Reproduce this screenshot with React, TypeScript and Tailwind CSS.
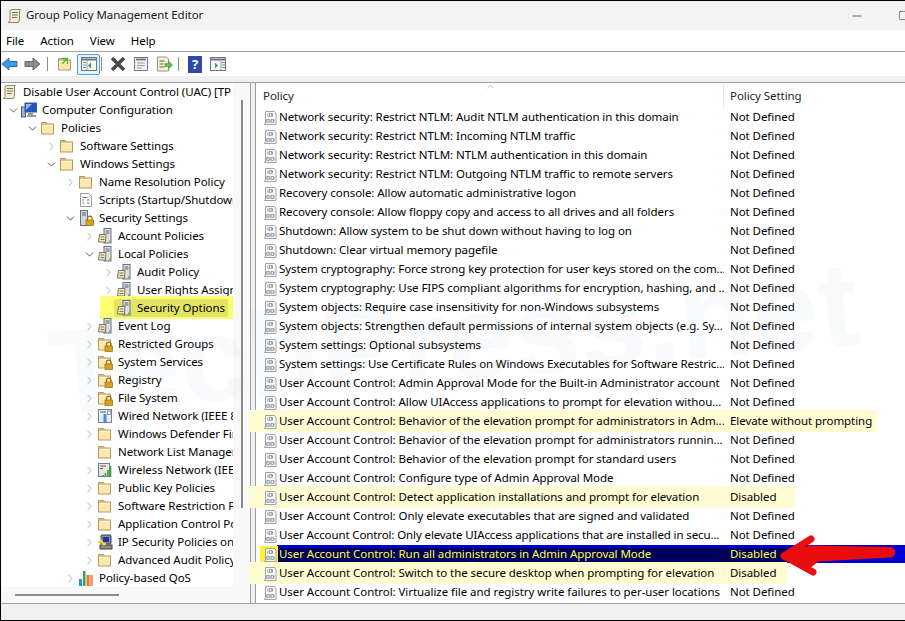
import React from 'react';
import { ChevronRight, ChevronDown, Minus, Square, ArrowUpRight } from 'lucide-react';

type Kind = 'scroll' | 'computer' | 'folder' | 'script' | 'secure' | 'server' | 'lockfolder' | 'wired' | 'wireless' | 'ipsec' | 'qos';

const treeRows: { label: string; depth: number; icon: Kind; arrow?: 'open' | 'closed'; selected?: boolean }[] = [
  { label: 'Disable User Account Control (UAC) [TP', depth: 0, icon: 'scroll' },
  { label: 'Computer Configuration', depth: 1, icon: 'computer', arrow: 'open' },
  { label: 'Policies', depth: 2, icon: 'folder', arrow: 'open' },
  { label: 'Software Settings', depth: 3, icon: 'folder', arrow: 'closed' },
  { label: 'Windows Settings', depth: 3, icon: 'folder', arrow: 'open' },
  { label: 'Name Resolution Policy', depth: 4, icon: 'folder', arrow: 'closed' },
  { label: 'Scripts (Startup/Shutdown)', depth: 4, icon: 'script' },
  { label: 'Security Settings', depth: 4, icon: 'secure', arrow: 'open' },
  { label: 'Account Policies', depth: 5, icon: 'server', arrow: 'closed' },
  { label: 'Local Policies', depth: 5, icon: 'server', arrow: 'open' },
  { label: 'Audit Policy', depth: 6, icon: 'server', arrow: 'closed' },
  { label: 'User Rights Assignment', depth: 6, icon: 'server', arrow: 'closed' },
  { label: 'Security Options', depth: 6, icon: 'server', selected: true },
  { label: 'Event Log', depth: 5, icon: 'server', arrow: 'closed' },
  { label: 'Restricted Groups', depth: 5, icon: 'lockfolder', arrow: 'closed' },
  { label: 'System Services', depth: 5, icon: 'lockfolder', arrow: 'closed' },
  { label: 'Registry', depth: 5, icon: 'lockfolder', arrow: 'closed' },
  { label: 'File System', depth: 5, icon: 'lockfolder', arrow: 'closed' },
  { label: 'Wired Network (IEEE 802.3)', depth: 5, icon: 'wired', arrow: 'closed' },
  { label: 'Windows Defender Firewall', depth: 5, icon: 'folder', arrow: 'closed' },
  { label: 'Network List Manager Policies', depth: 5, icon: 'folder' },
  { label: 'Wireless Network (IEEE 802.11)', depth: 5, icon: 'wireless', arrow: 'closed' },
  { label: 'Public Key Policies', depth: 5, icon: 'folder', arrow: 'closed' },
  { label: 'Software Restriction Policies', depth: 5, icon: 'folder', arrow: 'closed' },
  { label: 'Application Control Policies', depth: 5, icon: 'folder', arrow: 'closed' },
  { label: 'IP Security Policies on Local', depth: 5, icon: 'ipsec', arrow: 'closed' },
  { label: 'Advanced Audit Policy', depth: 5, icon: 'folder', arrow: 'closed' },
  { label: 'Policy-based QoS', depth: 4, icon: 'qos', arrow: 'closed' },
];

const ND = 'Not Defined';
const policies: { name: string; value: string; tight?: boolean; mark?: 'w877' | 'w795' | 'w787' | 'selected' }[] = [
  { name: 'Network security: Restrict NTLM: Audit NTLM authentication in this domain', value: ND },
  { name: 'Network security: Restrict NTLM: Incoming NTLM traffic', value: ND },
  { name: 'Network security: Restrict NTLM: NTLM authentication in this domain', value: ND },
  { name: 'Network security: Restrict NTLM: Outgoing NTLM traffic to remote servers', value: ND },
  { name: 'Recovery console: Allow automatic administrative logon', value: ND },
  { name: 'Recovery console: Allow floppy copy and access to all drives and all folders', value: ND },
  { name: 'Shutdown: Allow system to be shut down without having to log on', value: ND },
  { name: 'Shutdown: Clear virtual memory pagefile', value: ND },
  { name: 'System cryptography: Force strong key protection for user keys stored on the com...', value: ND },
  { name: 'System cryptography: Use FIPS compliant algorithms for encryption, hashing, and ...', value: ND },
  { name: 'System objects: Require case insensitivity for non-Windows subsystems', value: ND },
  { name: 'System objects: Strengthen default permissions of internal system objects (e.g. Sy...', value: ND },
  { name: 'System settings: Optional subsystems', value: ND },
  { name: 'System settings: Use Certificate Rules on Windows Executables for Software Restric...', value: ND, tight: true },
  { name: 'User Account Control: Admin Approval Mode for the Built-in Administrator account', value: ND },
  { name: 'User Account Control: Allow UIAccess applications to prompt for elevation withou...', value: ND },
  { name: 'User Account Control: Behavior of the elevation prompt for administrators in Adm...', value: 'Elevate without prompting', mark: 'w877' },
  { name: 'User Account Control: Behavior of the elevation prompt for administrators runnin...', value: ND },
  { name: 'User Account Control: Behavior of the elevation prompt for standard users', value: ND },
  { name: 'User Account Control: Configure type of Admin Approval Mode', value: ND },
  { name: 'User Account Control: Detect application installations and prompt for elevation', value: 'Disabled', mark: 'w795' },
  { name: 'User Account Control: Only elevate executables that are signed and validated', value: ND },
  { name: 'User Account Control: Only elevate UIAccess applications that are installed in secu...', value: ND, tight: true },
  { name: 'User Account Control: Run all administrators in Admin Approval Mode', value: 'Disabled', mark: 'selected' },
  { name: 'User Account Control: Switch to the secure desktop when prompting for elevation', value: 'Disabled', mark: 'w787' },
  { name: 'User Account Control: Virtualize file and registry write failures to per-user locations', value: ND },
];

function FolderShape() {
  return (
    <>
      <path d="M1.5 4V2.5h5l1 1.5" fill="#f6e3a8" stroke="#b59a5a" strokeWidth="1" />
      <rect x="1.5" y="4" width="12" height="10" fill="#fbe8b0" stroke="#b59a5a" strokeWidth="1" />
      <rect x="2.5" y="5" width="10" height="1" fill="#fff6d8" />
    </>
  );
}

function Lock() {
  return (
    <>
      <path d="M9.5 10V8.5a2.3 2.3 0 0 1 4.6 0V10" fill="none" stroke="#8f7420" strokeWidth="1.2" />
      <rect x="8" y="10" width="7.5" height="5.5" fill="#d9a21e" stroke="#8f6b10" strokeWidth="0.7" />
    </>
  );
}

function TreeIcon({ kind }: { kind: Kind }) {
  return (
    <svg width="16" height="16" viewBox="0 0 16 16" className="shrink-0">
      {kind === 'scroll' && (
        <>
          <path d="M4 1.5h9.5l-1 1.5v9l-1 2.5H1.5L3 12.5V3z" fill="#f8eecb" stroke="#8c8470" strokeWidth="1" />
          <path d="M5 4.5h6M5 7h6M5 9.5h5" stroke="#77705e" strokeWidth="1" />
        </>
      )}
      {kind === 'computer' && (
        <>
          <rect x="0.5" y="5" width="4" height="10" fill="#9fb6d4" stroke="#3c5a86" strokeWidth="1" />
          <rect x="4" y="1" width="11.5" height="9" fill="#1f56c9" stroke="#4a5a70" strokeWidth="1" />
          <path d="M5 2h6l-6 6z" fill="#8db6f2" />
          <path d="M7 11h5v2H7z" fill="#8b97a8" />
          <path d="M6 14h9" stroke="#6b7688" strokeWidth="1.4" />
        </>
      )}
      {kind === 'folder' && <FolderShape />}
      {kind === 'lockfolder' && (
        <>
          <FolderShape />
          <Lock />
        </>
      )}
      {kind === 'script' && (
        <>
          <path d="M2.5 1.5h8l3 3v10h-11z" fill="#fbfbfb" stroke="#9b9b9b" strokeWidth="1" />
          <path d="M4.5 5.5h5M4.5 8h1.5M9 8h2.5M4.5 11h1.5M9 11h2.5" stroke="#777" strokeWidth="1" />
        </>
      )}
      {kind === 'secure' && (
        <>
          <rect x="2.5" y="0.5" width="7" height="15" fill="#cfd6df" stroke="#68717c" strokeWidth="1" />
          <path d="M4 3h4M4 5h4" stroke="#59636f" strokeWidth="1" />
          <Lock />
        </>
      )}
      {kind === 'server' && (
        <>
          <rect x="7" y="0.5" width="7" height="14.5" fill="#dde1e6" stroke="#69717a" strokeWidth="1" />
          <path d="M8.5 3h4M8.5 5h4" stroke="#59636f" strokeWidth="1" />
          <rect x="12" y="12.5" width="1.5" height="1.5" fill="#4fbf42" />
          <path d="M2.5 6.5h6.5l-.5 7.5H1.5z" fill="#f2e8c4" stroke="#7c7558" strokeWidth="1" />
          <path d="M3.5 9h4M3.5 11.5h4" stroke="#7c7558" strokeWidth="1" />
        </>
      )}
      {kind === 'wired' && (
        <>
          <rect x="1.5" y="1.5" width="13" height="13" fill="#e6ecf2" stroke="#77828e" strokeWidth="1" />
          <path d="M3 4h6" stroke="#57606b" strokeWidth="1" />
          <path d="M8 15V6" stroke="#4d8ec9" strokeWidth="3" />
          <rect x="10.5" y="3" width="3.5" height="3.5" fill="#fff" stroke="#6a7580" strokeWidth="0.7" />
        </>
      )}
      {kind === 'wireless' && (
        <>
          <rect x="1.5" y="1.5" width="11" height="13" fill="#e6e6e0" stroke="#77797c" strokeWidth="1" />
          <path d="M3 4h6M3 6.5h3" stroke="#57606b" strokeWidth="1" />
          <path d="M6 15v-2M8.5 15v-4M11 15V8M13.5 15V4" stroke="#3fa34a" strokeWidth="1.7" />
        </>
      )}
      {kind === 'ipsec' && (
        <>
          <rect x="4" y="1" width="10" height="9" rx="1" fill="#8c8c94" stroke="#3f3f46" strokeWidth="1" />
          <rect x="6" y="3" width="6" height="5" fill="#1c2fb8" />
          <rect x="3" y="11" width="12" height="4" fill="#8e8e8e" stroke="#3f3f46" strokeWidth="1" />
          <path d="M1 8.5l3-2 2.5 4L9 9.5" fill="none" stroke="#f6e11f" strokeWidth="2" />
        </>
      )}
      {kind === 'qos' && (
        <>
          <rect x="1" y="9" width="3" height="7" fill="#2b8fd8" />
          <rect x="5" y="1" width="2.5" height="15" fill="#35a845" />
          <rect x="8.5" y="5" width="3" height="11" fill="#f0703a" />
          <rect x="12" y="5" width="3" height="11" fill="#f09a76" />
        </>
      )}
    </svg>
  );
}

function PolicyIcon() {
  // paper sheet with the binary 10 / 010 marks
  return (
    <svg width="16" height="16" viewBox="0 0 16 16" className="shrink-0">
      <path d="M3.5 1.5h9l1.5 1.5v11.5H2.5l1-1.5z" fill="#f9f9f9" stroke="#a3a3a3" strokeWidth="1" />
      <path d="M6 3.5v3M10.5 3.5v3M4 9.5v3M8 9.5v3M12 9.5v3" stroke="#8a97a3" strokeWidth="1" />
      <rect x="7.5" y="3.5" width="2" height="3" fill="none" stroke="#8a97a3" strokeWidth="0.8" />
      <rect x="5" y="9.5" width="2" height="3" fill="none" stroke="#8a97a3" strokeWidth="0.8" />
      <rect x="9.2" y="9.5" width="2" height="3" fill="none" stroke="#8a97a3" strokeWidth="0.8" />
    </svg>
  );
}

function TreeRow({ row }: { row: (typeof treeRows)[number] }) {
  return (
    <div className="relative flex h-[18px] items-center whitespace-nowrap" style={{ paddingLeft: row.depth === 0 ? 1 : (row.depth - 1) * 19 + 4 }}>
      {row.selected && (
        <>
          <div className="absolute left-[99px] top-[-3px] h-[23px] w-[133px] bg-[#fdfd72]" />
          <div className="absolute left-[113px] top-0 h-[18px] w-[114px] rounded-[2px] bg-[#e3e364]" />
        </>
      )}
      {row.depth > 0 && (
        <span className="relative flex w-[16px] shrink-0 items-center justify-center">
          {row.arrow === 'open' && <ChevronDown size={13} strokeWidth={1.6} className="text-[#404040]" />}
          {row.arrow === 'closed' && <ChevronRight size={13} strokeWidth={1.6} className="text-[#a6a6a6]" />}
        </span>
      )}
      <span className="relative flex items-center">
        <TreeIcon kind={row.icon} />
        <span className="ml-[5px] text-black">{row.label}</span>
      </span>
    </div>
  );
}

function PolicyRow({ p }: { p: (typeof policies)[number] }) {
  const sel = p.mark === 'selected';
  return (
    <div className="relative flex h-[19px] items-center whitespace-nowrap">
      {p.mark === 'w877' && <div className="absolute left-[-7px] top-[-2px] h-[22px] w-[628px] bg-[#fffbd2]" />}
      {p.mark === 'w795' && <div className="absolute left-[-7px] top-[-2px] h-[22px] w-[546px] bg-[#fffbd2]" />}
      {p.mark === 'w787' && <div className="absolute left-[-7px] top-[-2px] h-[22px] w-[538px] bg-[#fffbd2]" />}
      {sel && (
        <>
          <div className="absolute left-[21px] right-0 top-0 h-[18px] bg-[#0000d2]" />
          <div className="absolute left-[22px] top-[3px] h-[14px] w-[509px] bg-[#00005a]" />
          <div className="absolute left-[4px] top-[1px] h-[17px] w-[18px] bg-[#fdf33c]" />
        </>
      )}
      <span className="relative ml-[6px] flex w-[462px] shrink-0 items-center overflow-hidden">
        <PolicyIcon />
        <span className={`ml-[1px] pb-[2px] ${sel ? 'text-[#ffff40]' : 'text-black'} ${p.tight ? 'tracking-[-0.12px]' : ''}`}>{p.name}</span>
      </span>
      <span className={`relative pb-[2px] pl-[6px] ${sel ? 'text-[#ffff40]' : 'text-black'}`}>{p.value}</span>
    </div>
  );
}

function PanelGlyph({ side }: { side: 'left' | 'right' }) {
  return (
    <svg width="16" height="16" viewBox="0 0 16 16">
      <rect x="0.5" y="1.5" width="15" height="13" fill="#f7f7f7" stroke="#6f7680" />
      <path d="M1 3.5h14" stroke="#6f7680" strokeWidth="2" />
      {side === 'left' ? (
        <>
          <path d="M2 6.5h3M2 9h3M2 11.5h3" stroke="#6f8fb0" />
          <path d="M10 6.5v6l-3-3z" fill="#2ea84a" />
          <path d="M6 5v9" stroke="#9aa2ac" />
        </>
      ) : (
        <>
          <path d="M5 6.5v6l3-3z" fill="#2ea84a" />
          <path d="M11 5v9" stroke="#9aa2ac" />
          <path d="M12 6.5h3M12 9h3M12 11.5h3" stroke="#6f8fb0" />
        </>
      )}
    </svg>
  );
}

export default function App() {
  return (
    <div className="relative flex h-[621px] w-[905px] flex-col overflow-hidden border-b border-l border-t border-black bg-[#f0f0f0] text-[11.5px] tracking-[-0.06px] [font-family:'Noto_Sans',sans-serif]">
      {/* title bar */}
      <div className="flex h-[29px] shrink-0 items-center bg-[#f3f3f3] pl-[6px] text-[#1a1a1a]">
        <TreeIcon kind="scroll" />
        <span className="ml-[3px] pb-[2px]">Group Policy Management Editor</span>
        <Minus size={14} strokeWidth={1} className="ml-auto mr-[34px] shrink-0 text-black" />
        <Square size={11} strokeWidth={1} className="mr-[-4px] shrink-0 text-black" />
      </div>
      {/* menu */}
      <div className="flex h-[22px] shrink-0 items-center gap-[16px] border-b border-[#a0a0a0] bg-white pl-[5px] text-black">
        <span>File</span>
        <span>Action</span>
        <span>View</span>
        <span>Help</span>
      </div>
      {/* toolbar */}
      <div className="flex h-[24px] shrink-0 items-center bg-white">
        <svg width="17" height="16" viewBox="0 0 17 16" className="mr-[6px]">
          <path d="M1 8l7-6v3.5h8v5H8V14z" fill="#3f9be6" stroke="#1f6fb8" />
        </svg>
        <svg width="17" height="16" viewBox="0 0 17 16">
          <path d="M16 8L9 2v3.5H1v5h8V14z" fill="#8e8e8e" stroke="#6a6a6a" />
        </svg>
        <div className="mx-[6px] h-[14px] w-px bg-[#8a8a8a]" />
        <div className="relative ml-[3px] h-[16px] w-[16px]">
          <svg width="16" height="16" viewBox="0 0 16 16">
            <FolderShape />
          </svg>
          <ArrowUpRight size={12} strokeWidth={2.6} className="absolute left-[2px] top-[-1px] text-[#4fae2f]" />
        </div>
        <div className="ml-[4px] flex h-[21px] w-[23px] items-center justify-center rounded-[2px] border border-[#4a9fe8] bg-[#e5f1fb]">
          <PanelGlyph side="left" />
        </div>
        <div className="ml-[1px] h-[14px] w-px bg-[#8a8a8a]" />
        <svg width="18" height="18" viewBox="0 0 18 18" className="ml-[7px]">
          <path d="M3 3l12 12M15 3L3 15" stroke="#4a4a4a" strokeWidth="3.6" />
        </svg>
        <svg width="16" height="16" viewBox="0 0 16 16" className="ml-[6px]">
          <rect x="1.5" y="1.5" width="13" height="13" fill="#f2f2f2" stroke="#7c7c7c" />
          <path d="M3 3.5h10" stroke="#7c7c7c" strokeWidth="2" />
          <path d="M4 7h8M4 9.5h8M4 12h5" stroke="#8ba0b4" />
        </svg>
        <svg width="17" height="16" viewBox="0 0 17 16" className="ml-[7px]">
          <path d="M1.5 1h9l2 2v12h-11z" fill="#f8f1d8" stroke="#9b957e" />
          <path d="M3.5 5h5M3.5 8h4M3.5 11h5" stroke="#66624f" />
          <path d="M9 7.5h3.5V5l4 4-4 4v-2.5H9z" fill="#5cc04b" stroke="#3b9a34" strokeWidth="0.6" />
        </svg>
        <div className="ml-[5px] mr-[9px] h-[14px] w-px bg-[#8a8a8a]" />
        <div className="flex h-[17px] w-[14px] items-center justify-center bg-[#2f4aa8] text-[13px] font-bold leading-none text-white">?</div>
        <div className="ml-[8px]">
          <PanelGlyph side="right" />
        </div>
      </div>
      <div className="h-[7px] shrink-0 border-b border-[#a0a0a0] bg-[#f0f0f0]" />

      {/* panes */}
      <div className="flex min-h-0 flex-1">
        <div className="flex w-[250px] shrink-0 flex-col border-r border-[#a0a0a0]">
          <div className="flex min-h-0 flex-1">
            <div className="w-[232px] shrink-0 overflow-hidden bg-white">
              {treeRows.map((r) => (
                <TreeRow key={r.label} row={r} />
              ))}
            </div>
            <div className="flex flex-1 justify-center bg-[#f8f8f8] pt-[17px]">
              <div className="h-[408px] w-[2px] bg-[#8a8a8a]" />
            </div>
          </div>
          <div className="h-[16px] shrink-0 bg-[#f8f8f8] pl-[14px] pt-[7px]">
            <div className="h-[2px] w-[104px] bg-[#8a8a8a]" />
          </div>
        </div>
        <div className="ml-[4px] flex min-w-0 flex-1 flex-col border-l border-[#a0a0a0] bg-white">
          <div className="relative flex h-[25px] shrink-0 items-center text-[#1f1f1f]">
            <ChevronDown size={11} strokeWidth={1.2} className="absolute left-[229px] top-[-2px] rotate-180 text-[#8a8a8a]" />
            <span className="w-[467px] pl-[7px]">Policy</span>
            <span className="flex h-[24px] items-center border-l border-[#e5e5e5] pl-[6px]">Policy Setting</span>
          </div>
          {policies.map((p) => (
            <PolicyRow key={p.name} p={p} />
          ))}
        </div>
      </div>
      <div className="h-[17px] shrink-0 border-t border-[#a0a0a0] bg-[#f0f0f0]" />

      {/* watermark */}
      <div className="pointer-events-none absolute left-[52px] top-[312px] origin-[0px_102px] -rotate-[5deg] whitespace-nowrap text-[120px] font-bold leading-[120px] tracking-normal text-[#5a7896]/[0.04] [font-family:'Liberation_Sans',sans-serif]">
        TechPress.net
      </div>

      {/* arrow pasted over the selected row */}
      <svg width="125" height="45" viewBox="0 0 125 45" className="pointer-events-none absolute left-[777px] top-[532px]">
        <path d="M6 23L33 6M6 23L35 39" stroke="#ea0d0d" strokeWidth="7" strokeLinecap="round" fill="none" />
        <path d="M6 23L32 14L112 15.5a3.5 3.5 0 0 1 0 7.5L40 27L32 33z" fill="#ea0d0d" stroke="#ea0d0d" strokeWidth="3" strokeLinejoin="round" />
      </svg>
    </div>
  );
}
